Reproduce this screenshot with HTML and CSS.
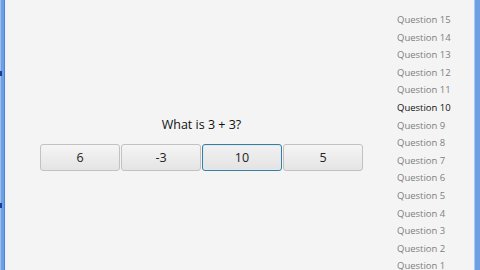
FILE: index.html
```html
<!DOCTYPE html>
<html>
<head>
<meta charset="utf-8">
<link rel="stylesheet" href="styles.css">
</head>
<body>
<div class="frame">
  <div class="edge-left"><span class="tick t1"></span><span class="tick t2"></span></div>
  <main class="main">
    <div class="question">What is 3 + 3?</div>
    <div class="answers">
      <button class="ans">6</button>
      <button class="ans">-3</button>
      <button class="ans focused">10</button>
      <button class="ans">5</button>
    </div>
  </main>
  <aside class="side">
    <div class="q">Question 15</div>
    <div class="q">Question 14</div>
    <div class="q">Question 13</div>
    <div class="q">Question 12</div>
    <div class="q">Question 11</div>
    <div class="q current">Question 10</div>
    <div class="q">Question 9</div>
    <div class="q">Question 8</div>
    <div class="q">Question 7</div>
    <div class="q">Question 6</div>
    <div class="q">Question 5</div>
    <div class="q">Question 4</div>
    <div class="q">Question 3</div>
    <div class="q">Question 2</div>
    <div class="q">Question 1</div>
  </aside>
  <div class="edge-right"></div>
</div>
</body>
</html>
```
FILE: styles.css
```css
html, body {
  margin: 0;
  padding: 0;
  width: 480px;
  height: 270px;
  overflow: hidden;
  background: #f4f4f4;
  font-family: "Open Sans", "Noto Sans", sans-serif;
}
.frame {
  display: flex;
  width: 480px;
  height: 270px;
}
.edge-left {
  position: relative;
  width: 6px;
  flex: none;
  background: linear-gradient(to right, #9cc0ee 0, #9cc0ee 1px, #6e9fe2 1px, #6e9fe2 4px, #4f84d4 4px, #4f84d4 5px, #e9f1fb 5px);
}
.tick {
  position: absolute;
  left: 0;
  width: 2px;
  height: 5px;
  background: #1c3d9c;
}
.t1 { top: 71px; }
.t2 { top: 203px; }
.main {
  flex: 1;
  display: flex;
  flex-direction: column;
  align-items: center;
  padding-top: 116px;
}
.question {
  font-size: 12.5px;
  color: #111;
  line-height: 17px;
  margin-bottom: 11px;
}
.answers {
  display: flex;
  gap: 1px;
}
.ans {
  width: 80px;
  height: 27px;
  margin: 0;
  padding: 0;
  font-family: inherit;
  font-size: 12.5px;
  color: #222;
  border: 1px solid #c2c2c2;
  border-radius: 3px;
  background: linear-gradient(to bottom, #f5f5f5, #e4e4e4);
}
.ans.focused {
  border-color: #3f7c9c;
  box-shadow: inset 0 0 0 1px #d8ecf6;
  background: linear-gradient(to bottom, #f1f1f1, #e3e3e3);
}
.side {
  width: 76px;
  flex: none;
  padding-top: 11px;
}
.q {
  font-size: 9.5px;
  line-height: 17.6px;
  color: #808080;
}
.q.current {
  color: #111;
}
.edge-right {
  width: 7px;
  flex: none;
  background: linear-gradient(to right, #eef4fb 0, #eef4fb 1px, #a9c9f1 1px, #a9c9f1 2px, #6e9fe2 2px);
}
```
